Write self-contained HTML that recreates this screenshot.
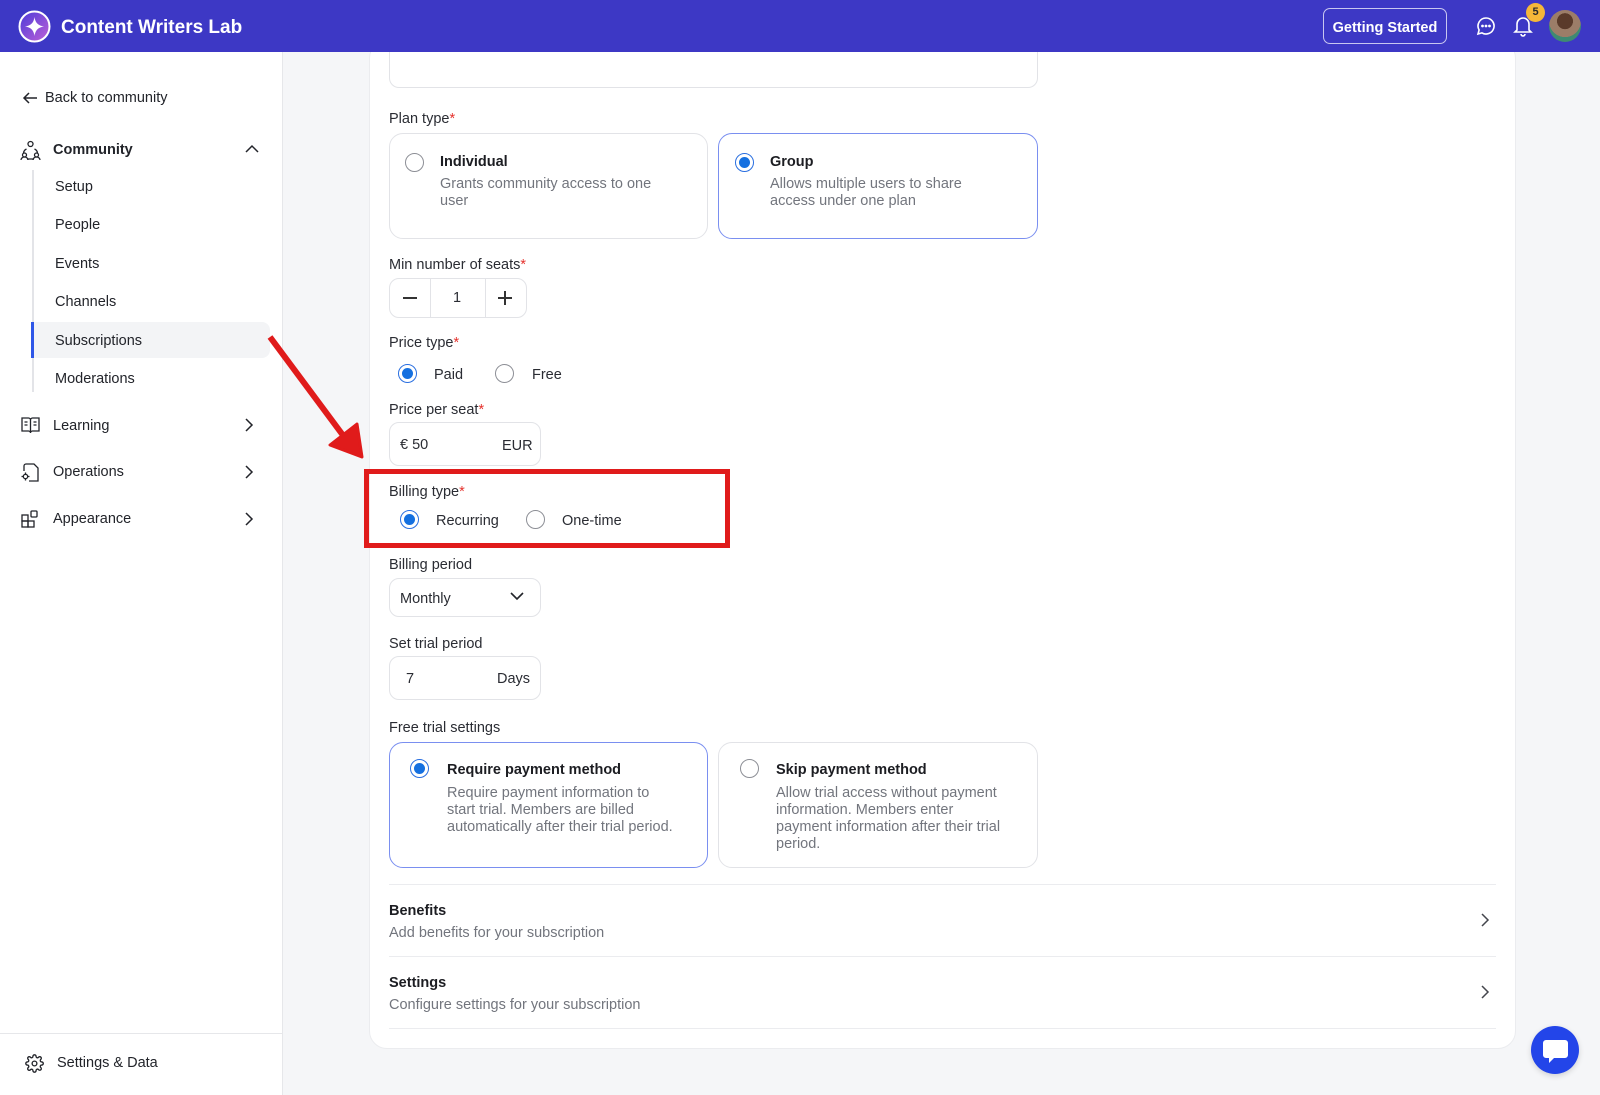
<!DOCTYPE html>
<html><head><meta charset="utf-8"><style>
*{box-sizing:border-box;margin:0;padding:0}
body{width:1600px;height:1095px;position:relative;overflow:hidden;background:#f5f6f8;font-family:"Liberation Sans",sans-serif;color:#1f2128;font-size:14.5px}
.a{position:absolute}
.hdr{left:0;top:0;width:1600px;height:52px;background:#3d38c5;z-index:10}
.side{left:0;top:52px;width:283px;height:1043px;background:#fff;border-right:1px solid #e6e7ea}
.nav{position:absolute;font-size:14.5px;color:#22242a}
.card{left:369px;top:40px;width:1147px;height:1009px;background:#fff;border-radius:18px;border:1px solid #ebecef}
.lbl{position:absolute;font-size:14.5px;color:#2a2c33}
.req{color:#e5322d}
.box{position:absolute;border:1px solid #e2e3e7;border-radius:10px;background:#fff}
.sel{border-color:#7a8ff0}
.rad{position:absolute;width:19px;height:19px;border-radius:50%;border:1.5px solid #8d8f96;background:#fff}
.rad.on{border:1.5px solid #2a6fe0}
.rad.on:after{content:"";position:absolute;left:2.5px;top:2.5px;width:11px;height:11px;border-radius:50%;background:#1570e0}
.t{position:absolute;font-weight:bold;font-size:14.5px;color:#1c1d22}
.d{position:absolute;font-size:14.5px;color:#72757d;line-height:17px}
.hr{position:absolute;left:389px;width:1107px;height:1px;background:#ebecef}
</style></head><body>
<div class="a hdr">
  <svg class="a" style="left:18px;top:10px" width="33" height="33" viewBox="0 0 33 33"><defs><linearGradient id="g" x1="0" y1="0" x2="1" y2="1"><stop offset="0" stop-color="#4a3bd8"/><stop offset="1" stop-color="#c060d8"/></linearGradient></defs><circle cx="16.5" cy="16.5" r="15" fill="url(#g)" stroke="#fff" stroke-width="2"/><path d="M16.5 7 Q17.5 15.5 26 16.5 Q17.5 17.5 16.5 26 Q15.5 17.5 7 16.5 Q15.5 15.5 16.5 7Z" fill="#fff"/></svg>
  <div class="a" style="left:61px;top:17px;color:#fff;font-weight:bold;font-size:19px">Content Writers Lab</div>
  <div class="a" style="left:1323px;top:8px;width:124px;height:36px;border:1.5px solid #c9c7f0;border-radius:7px;color:#fff;font-size:14.5px;font-weight:bold;text-align:center;line-height:38px;overflow:hidden">Getting Started</div>
  <svg class="a" style="left:1476px;top:16px" width="20" height="20" viewBox="0 0 20 20" fill="none" stroke="#fff" stroke-width="1.6"><path d="M10 2a8 8 0 1 1-4 14.9L2 18l1.1-4A8 8 0 0 1 10 2z"/><circle cx="6.5" cy="10" r=".6" fill="#fff"/><circle cx="10" cy="10" r=".6" fill="#fff"/><circle cx="13.5" cy="10" r=".6" fill="#fff"/></svg>
  <svg class="a" style="left:1513px;top:15px" width="20" height="22" viewBox="0 0 20 22" fill="none" stroke="#fff" stroke-width="1.6"><path d="M4 15V9a6 6 0 0 1 12 0v6l2 2H2z"/><path d="M8 19a2 2 0 0 0 4 0"/></svg>
  <div class="a" style="left:1526px;top:3px;width:19px;height:19px;border-radius:50%;background:#f5b739;color:#2b2b2b;font-size:11px;text-align:center;line-height:19px;font-weight:bold">5</div>
  <div class="a" style="left:1549px;top:10px;width:32px;height:32px;border-radius:50%;background:radial-gradient(circle at 50% 35%,#5a3a2a 0 30%,#9c7d68 31% 60%,#3e8a72 61%)"></div>
</div>
<div class="a side">
  <svg class="a" style="left:22px;top:38px" width="16" height="16" viewBox="0 0 16 16" fill="none" stroke="#22242a" stroke-width="1.5"><path d="M15 8H2M7 3L2 8l5 5"/></svg>
  <div class="nav" style="left:45px;top:38px">Back to community</div>
  <svg class="a" style="left:20px;top:88px" width="21" height="21" viewBox="0 0 21 21" fill="none" stroke="#22242a" stroke-width="1.3"><circle cx="10.5" cy="4" r="2.5"/><circle cx="4.5" cy="15" r="2"/><circle cx="16.5" cy="15" r="2"/><path d="M1 20a3.5 3 0 0 1 7 0M13 20a3.5 3 0 0 1 7 0M6.5 9a5 5 0 0 0-3 4M14.5 9a5 5 0 0 1 3 4M7 19h7"/></svg>
  <div class="nav" style="left:53px;top:90px;font-weight:bold">Community</div>
  <svg class="a" style="left:245px;top:92px" width="14" height="9" viewBox="0 0 14 9" fill="none" stroke="#22242a" stroke-width="1.5"><path d="M1 8l6-6 6 6"/></svg>
  <div class="a" style="left:32px;top:118px;width:2px;height:222px;background:#e3e4e8"></div>
  <div class="nav" style="left:55px;top:127px">Setup</div>
  <div class="nav" style="left:55px;top:165px">People</div>
  <div class="nav" style="left:55px;top:204px">Events</div>
  <div class="nav" style="left:55px;top:242px">Channels</div>
  <div class="a" style="left:31px;top:270px;width:239px;height:36px;background:#f3f4f6;border-radius:0 8px 8px 0"></div>
  <div class="a" style="left:31px;top:270px;width:3px;height:36px;background:#2f57e8"></div>
  <div class="nav" style="left:55px;top:281px">Subscriptions</div>
  <div class="nav" style="left:55px;top:319px">Moderations</div>
  <svg class="a" style="left:21px;top:365px" width="19" height="17" viewBox="0 0 19 17" fill="none" stroke="#22242a" stroke-width="1.3"><path d="M1 1h6.5a2 2 0 0 1 2 2v13a2 2 0 0 0-2-2H1zM18 1h-6.5a2 2 0 0 0-2 2v13a2 2 0 0 1 2-2H18z"/><path d="M3.5 5h3M3.5 8h3M12.5 5h3M12.5 8h3"/></svg>
  <div class="nav" style="left:53px;top:366px">Learning</div>
  <svg class="a" style="left:21px;top:411px" width="18" height="19" viewBox="0 0 18 19" fill="none" stroke="#22242a" stroke-width="1.3"><path d="M7 1h6l4 4v13H8M3 8V3a2 2 0 0 1 2-2h2"/><circle cx="4.5" cy="13.5" r="2.2"/><path d="M4.5 9.5v1.5M4.5 16v1.5M0.5 13.5H2M7 13.5h1.5"/></svg>
  <div class="nav" style="left:53px;top:412px">Operations</div>
  <svg class="a" style="left:21px;top:458px" width="18" height="18" viewBox="0 0 18 18" fill="none" stroke="#22242a" stroke-width="1.3"><rect x="1" y="5" width="6" height="6"/><rect x="1" y="11" width="6" height="6"/><rect x="7" y="11" width="6" height="6"/><rect x="10" y="1" width="6" height="6" rx="1"/></svg>
  <div class="nav" style="left:53px;top:459px">Appearance</div>
  <svg class="a" style="left:245px;top:366px" width="9" height="14" viewBox="0 0 9 14" fill="none" stroke="#22242a" stroke-width="1.5"><path d="M1 1l6 6-6 6"/></svg>
  <svg class="a" style="left:245px;top:413px" width="9" height="14" viewBox="0 0 9 14" fill="none" stroke="#22242a" stroke-width="1.5"><path d="M1 1l6 6-6 6"/></svg>
  <svg class="a" style="left:245px;top:460px" width="9" height="14" viewBox="0 0 9 14" fill="none" stroke="#22242a" stroke-width="1.5"><path d="M1 1l6 6-6 6"/></svg>
  <div class="a" style="left:0;top:981px;width:282px;height:1px;background:#e6e7ea"></div>
  <svg class="a" style="left:25px;top:1002px" width="19" height="19" viewBox="0 0 24 24" fill="none" stroke="#22242a" stroke-width="1.7"><circle cx="12" cy="12" r="3"/><path d="M19.4 15a1.7 1.7 0 0 0 .3 1.8l.1.1a2 2 0 1 1-2.8 2.8l-.1-.1a1.7 1.7 0 0 0-2.9 1.2V21a2 2 0 1 1-4 0v-.1a1.7 1.7 0 0 0-2.9-1.2l-.1.1a2 2 0 1 1-2.8-2.8l.1-.1A1.7 1.7 0 0 0 3 14H3a2 2 0 1 1 0-4h.1a1.7 1.7 0 0 0 1.2-2.9l-.1-.1a2 2 0 1 1 2.8-2.8l.1.1A1.7 1.7 0 0 0 10 3V3a2 2 0 1 1 4 0v.1a1.7 1.7 0 0 0 2.9 1.2l.1-.1a2 2 0 1 1 2.8 2.8l-.1.1A1.7 1.7 0 0 0 21 10h.1a2 2 0 1 1 0 4h-.1a1.7 1.7 0 0 0-1.6 1z"/></svg>
  <div class="nav" style="left:57px;top:1003px">Settings &amp; Data</div>
</div>

<div class="a card"></div>
<div class="box" style="left:389px;top:40px;width:649px;height:48px;border-top:none;border-radius:0 0 10px 10px"></div>

<div class="lbl" style="left:389px;top:111px">Plan type<span class="req">*</span></div>
<div class="box" style="left:389px;top:133px;width:319px;height:106px;border-radius:14px"></div>
<div class="rad" style="left:405px;top:153px"></div>
<div class="t" style="left:440px;top:154px">Individual</div>
<div class="d" style="left:440px;top:176px">Grants community access to one<br>user</div>
<div class="box sel" style="left:718px;top:133px;width:320px;height:106px;border-radius:14px"></div>
<div class="rad on" style="left:735px;top:153px"></div>
<div class="t" style="left:770px;top:154px">Group</div>
<div class="d" style="left:770px;top:176px">Allows multiple users to share<br>access under one plan</div>

<div class="lbl" style="left:389px;top:257px">Min number of seats<span class="req">*</span></div>
<div class="box" style="left:389px;top:278px;width:138px;height:40px"></div>
<div class="a" style="left:430px;top:279px;width:1px;height:38px;background:#e2e3e7"></div>
<div class="a" style="left:485px;top:279px;width:1px;height:38px;background:#e2e3e7"></div>
<div class="a" style="left:403px;top:297px;width:14px;height:1.5px;background:#333"></div>
<div class="lbl" style="left:453px;top:290px">1</div>
<div class="a" style="left:498px;top:297px;width:14px;height:1.5px;background:#333"></div>
<div class="a" style="left:504.3px;top:291px;width:1.5px;height:14px;background:#333"></div>

<div class="lbl" style="left:389px;top:335px">Price type<span class="req">*</span></div>
<div class="rad on" style="left:398px;top:364px"></div>
<div class="lbl" style="left:434px;top:367px">Paid</div>
<div class="rad" style="left:495px;top:364px"></div>
<div class="lbl" style="left:532px;top:367px">Free</div>

<div class="lbl" style="left:389px;top:402px">Price per seat<span class="req">*</span></div>
<div class="box" style="left:389px;top:422px;width:152px;height:44px"></div>
<div class="lbl" style="left:400px;top:437px">€ 50</div>
<div class="lbl" style="left:502px;top:438px">EUR</div>

<div class="a" style="left:364px;top:469px;width:366px;height:79px;border:5px solid #e01b1b"></div>
<div class="lbl" style="left:389px;top:484px">Billing type<span class="req">*</span></div>
<div class="rad on" style="left:400px;top:510px"></div>
<div class="lbl" style="left:436px;top:513px">Recurring</div>
<div class="rad" style="left:526px;top:510px"></div>
<div class="lbl" style="left:562px;top:513px">One-time</div>

<div class="lbl" style="left:389px;top:557px">Billing period</div>
<div class="box" style="left:389px;top:578px;width:152px;height:39px"></div>
<div class="lbl" style="left:400px;top:591px">Monthly</div>
<svg class="a" style="left:510px;top:592px" width="14" height="9" viewBox="0 0 14 9" fill="none" stroke="#22242a" stroke-width="1.6"><path d="M1 1l6 6 6-6"/></svg>

<div class="lbl" style="left:389px;top:636px">Set trial period</div>
<div class="box" style="left:389px;top:656px;width:152px;height:44px"></div>
<div class="lbl" style="left:406px;top:671px">7</div>
<div class="lbl" style="left:497px;top:671px">Days</div>

<div class="lbl" style="left:389px;top:720px">Free trial settings</div>
<div class="box sel" style="left:389px;top:742px;width:319px;height:126px;border-radius:14px"></div>
<div class="rad on" style="left:410px;top:759px"></div>
<div class="t" style="left:447px;top:762px">Require payment method</div>
<div class="d" style="left:447px;top:785px">Require payment information to<br>start trial. Members are billed<br>automatically after their trial period.</div>
<div class="box" style="left:718px;top:742px;width:320px;height:126px;border-radius:14px"></div>
<div class="rad" style="left:740px;top:759px"></div>
<div class="t" style="left:776px;top:762px">Skip payment method</div>
<div class="d" style="left:776px;top:785px">Allow trial access without payment<br>information. Members enter<br>payment information after their trial<br>period.</div>

<div class="hr" style="top:884px"></div>
<div class="t" style="left:389px;top:903px">Benefits</div>
<div class="d" style="left:389px;top:925px">Add benefits for your subscription</div>
<svg class="a" style="left:1481px;top:913px" width="9" height="14" viewBox="0 0 9 14" fill="none" stroke="#44464d" stroke-width="1.5"><path d="M1 1l6 6-6 6"/></svg>
<div class="hr" style="top:956px"></div>
<div class="t" style="left:389px;top:975px">Settings</div>
<div class="d" style="left:389px;top:997px">Configure settings for your subscription</div>
<svg class="a" style="left:1481px;top:985px" width="9" height="14" viewBox="0 0 9 14" fill="none" stroke="#44464d" stroke-width="1.5"><path d="M1 1l6 6-6 6"/></svg>
<div class="hr" style="top:1028px"></div>

<div class="a" style="left:1531px;top:1026px;width:48px;height:48px;border-radius:50%;background:#2345e9;box-shadow:0 2px 6px rgba(0,0,0,.15)"></div>
<svg class="a" style="left:1543px;top:1040px" width="25" height="24" viewBox="0 0 25 24"><path d="M3 0h19a3 3 0 0 1 3 3v12a3 3 0 0 1-3 3H11l-5 5v-5H3a3 3 0 0 1-3-3V3a3 3 0 0 1 3-3z" fill="#fff"/></svg>

<svg class="a" style="left:0;top:0" width="1600" height="1095"><path d="M270 337L345 438" stroke="#e01b1b" stroke-width="6"/><path d="M330 445L362 457L357 424Z" fill="#e01b1b" stroke="#e01b1b" stroke-width="3" stroke-linejoin="round"/></svg>
</body></html>
